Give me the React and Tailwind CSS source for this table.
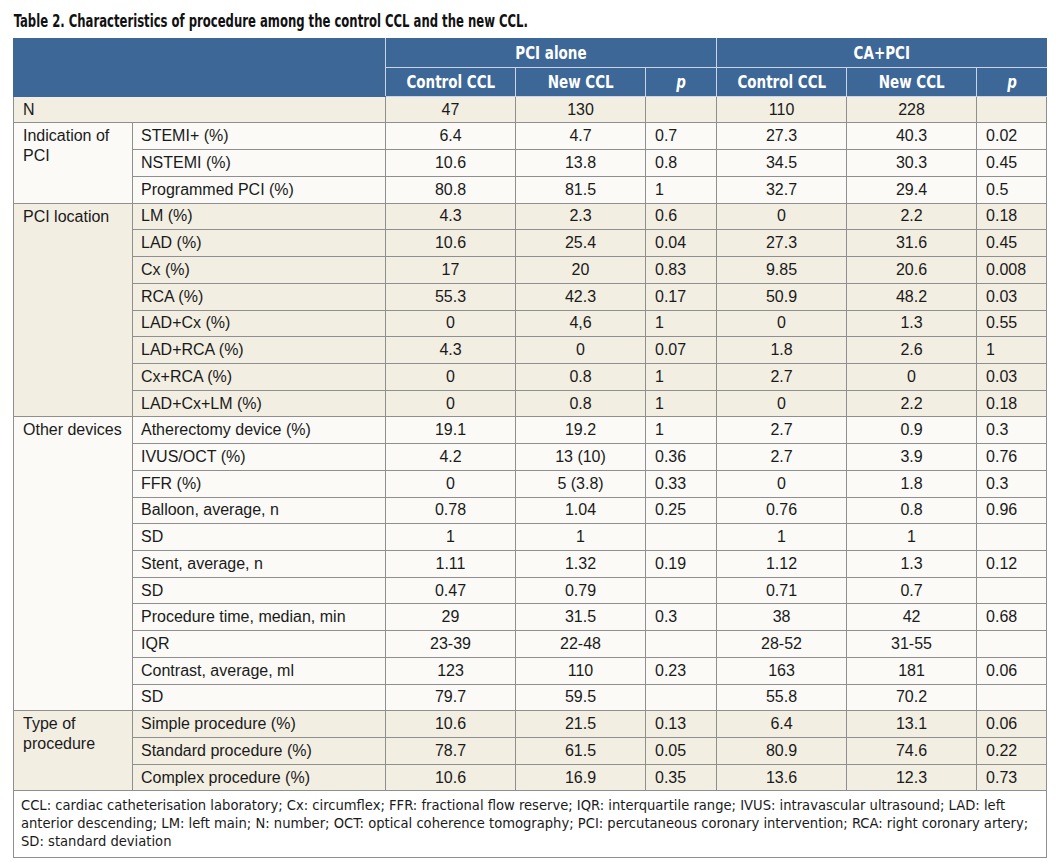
import React from 'react';

const groups = [
  {
    label: 'Indication of PCI',
    tone: 'white',
    rows: [
      ['STEMI+ (%)', '6.4', '4.7', '0.7', '27.3', '40.3', '0.02'],
      ['NSTEMI (%)', '10.6', '13.8', '0.8', '34.5', '30.3', '0.45'],
      ['Programmed PCI (%)', '80.8', '81.5', '1', '32.7', '29.4', '0.5'],
    ],
  },
  {
    label: 'PCI location',
    tone: 'beige',
    rows: [
      ['LM (%)', '4.3', '2.3', '0.6', '0', '2.2', '0.18'],
      ['LAD (%)', '10.6', '25.4', '0.04', '27.3', '31.6', '0.45'],
      ['Cx (%)', '17', '20', '0.83', '9.85', '20.6', '0.008'],
      ['RCA (%)', '55.3', '42.3', '0.17', '50.9', '48.2', '0.03'],
      ['LAD+Cx (%)', '0', '4,6', '1', '0', '1.3', '0.55'],
      ['LAD+RCA (%)', '4.3', '0', '0.07', '1.8', '2.6', '1'],
      ['Cx+RCA (%)', '0', '0.8', '1', '2.7', '0', '0.03'],
      ['LAD+Cx+LM (%)', '0', '0.8', '1', '0', '2.2', '0.18'],
    ],
  },
  {
    label: 'Other devices',
    tone: 'white',
    rows: [
      ['Atherectomy device (%)', '19.1', '19.2', '1', '2.7', '0.9', '0.3'],
      ['IVUS/OCT (%)', '4.2', '13 (10)', '0.36', '2.7', '3.9', '0.76'],
      ['FFR (%)', '0', '5 (3.8)', '0.33', '0', '1.8', '0.3'],
      ['Balloon, average, n', '0.78', '1.04', '0.25', '0.76', '0.8', '0.96'],
      ['SD', '1', '1', '', '1', '1', ''],
      ['Stent, average, n', '1.11', '1.32', '0.19', '1.12', '1.3', '0.12'],
      ['SD', '0.47', '0.79', '', '0.71', '0.7', ''],
      ['Procedure time, median, min', '29', '31.5', '0.3', '38', '42', '0.68'],
      ['IQR', '23-39', '22-48', '', '28-52', '31-55', ''],
      ['Contrast, average, ml', '123', '110', '0.23', '163', '181', '0.06'],
      ['SD', '79.7', '59.5', '', '55.8', '70.2', ''],
    ],
  },
  {
    label: 'Type of procedure',
    tone: 'beige',
    rows: [
      ['Simple procedure (%)', '10.6', '21.5', '0.13', '6.4', '13.1', '0.06'],
      ['Standard procedure (%)', '78.7', '61.5', '0.05', '80.9', '74.6', '0.22'],
      ['Complex procedure (%)', '10.6', '16.9', '0.35', '13.6', '12.3', '0.73'],
    ],
  },
];

const cond = "font-['DejaVu_Sans_Condensed',sans-serif]";
const cell = 'border border-[#8f8f8f] h-[26.73px] p-0 align-middle';

// condensed header label
const Head = ({ children, italic }) => (
  <span className={`inline-block scale-x-[0.81] ${italic ? 'italic' : ''}`}>{children}</span>
);

export default function App() {
  return (
    <div className="bg-white w-[1059px] h-[862px] pl-[13px] text-[#1a1a1a] font-['Liberation_Sans',Arial,sans-serif]">
      {/* Title */}
      <div className="h-[38px] pt-[9px]">
        <h1 className={`${cond} inline-block origin-left scale-x-[0.70] font-bold text-[18.5px] leading-[24px] whitespace-nowrap pl-px text-[#111]`}>
          Table 2. Characteristics of procedure among the control CCL and the new CCL.
        </h1>
      </div>

      <table className="table-fixed border-collapse w-[1033px] text-[16px]">
        <colgroup>
          <col className="w-[119px]" />
          <col className="w-[253px]" />
          <col className="w-[130px]" />
          <col className="w-[130px]" />
          <col className="w-[71px]" />
          <col className="w-[130px]" />
          <col className="w-[130px]" />
          <col className="w-[70px]" />
        </colgroup>
        <thead className={`${cond} font-bold text-white text-[18.5px] bg-[#3c6797]`}>
          <tr className="h-[28px]">
            <th colSpan={2} rowSpan={2} className="border border-[#3c6797] border-r-[#c9d5e4]" />
            <th colSpan={3} className="border border-[#c9d5e4] border-t-[#3c6797]"><Head>PCI alone</Head></th>
            <th colSpan={3} className="border border-[#c9d5e4] border-t-[#3c6797] border-r-[#3c6797]"><Head>CA+PCI</Head></th>
          </tr>
          <tr className="h-[29px]">
            <th className="border border-[#c9d5e4]"><Head>Control CCL</Head></th>
            <th className="border border-[#c9d5e4]"><Head>New CCL</Head></th>
            <th className="border border-[#c9d5e4]"><Head italic>p</Head></th>
            <th className="border border-[#c9d5e4]"><Head>Control CCL</Head></th>
            <th className="border border-[#c9d5e4]"><Head>New CCL</Head></th>
            <th className="border border-[#c9d5e4] border-r-[#3c6797]"><Head italic>p</Head></th>
          </tr>
        </thead>
        <tbody>
          <tr className="bg-[#f2eee2]">
            <td colSpan={2} className={`${cell} pl-[9px]`}>N</td>
            <td className={`${cell} text-center`}>47</td>
            <td className={`${cell} text-center`}>130</td>
            <td className={cell}></td>
            <td className={`${cell} text-center`}>110</td>
            <td className={`${cell} text-center`}>228</td>
            <td className={cell}></td>
          </tr>
          {groups.map(group =>
            group.rows.map((row, i) => (
              <tr
                key={group.label + i}
                className={group.tone === 'beige' ? 'bg-[#f2eee2]' : 'bg-[#fbfaf7]'}
              >
                {i === 0 && (
                  <td
                    rowSpan={group.rows.length}
                    className="border border-[#8f8f8f] align-top pl-[9px] pr-1 pt-[3px] leading-[20px]"
                  >
                    {group.label}
                  </td>
                )}
                <td className={`${cell} pl-[8px] whitespace-nowrap`}>{row[0]}</td>
                <td className={`${cell} text-center`}>{row[1]}</td>
                <td className={`${cell} text-center`}>{row[2]}</td>
                <td className={`${cell} pl-[9px]`}>{row[3]}</td>
                <td className={`${cell} text-center`}>{row[4]}</td>
                <td className={`${cell} text-center`}>{row[5]}</td>
                <td className={`${cell} pl-[9px]`}>{row[6]}</td>
              </tr>
            ))
          )}
          <tr className="bg-white">
            <td
              colSpan={8}
              className={`${cond} border border-[#8f8f8f] text-[14.6px] leading-[18px] pl-[7px] pr-1 pt-[5px] pb-[7px] align-top`}
            >
              CCL: cardiac catheterisation laboratory; Cx: circumflex; FFR: fractional flow reserve; IQR: interquartile range; IVUS: intravascular ultrasound; LAD: left anterior descending; LM: left main; N: number; OCT: optical coherence tomography; PCI: percutaneous coronary intervention; RCA: right coronary artery; SD: standard deviation
            </td>
          </tr>
        </tbody>
      </table>
    </div>
  );
}
